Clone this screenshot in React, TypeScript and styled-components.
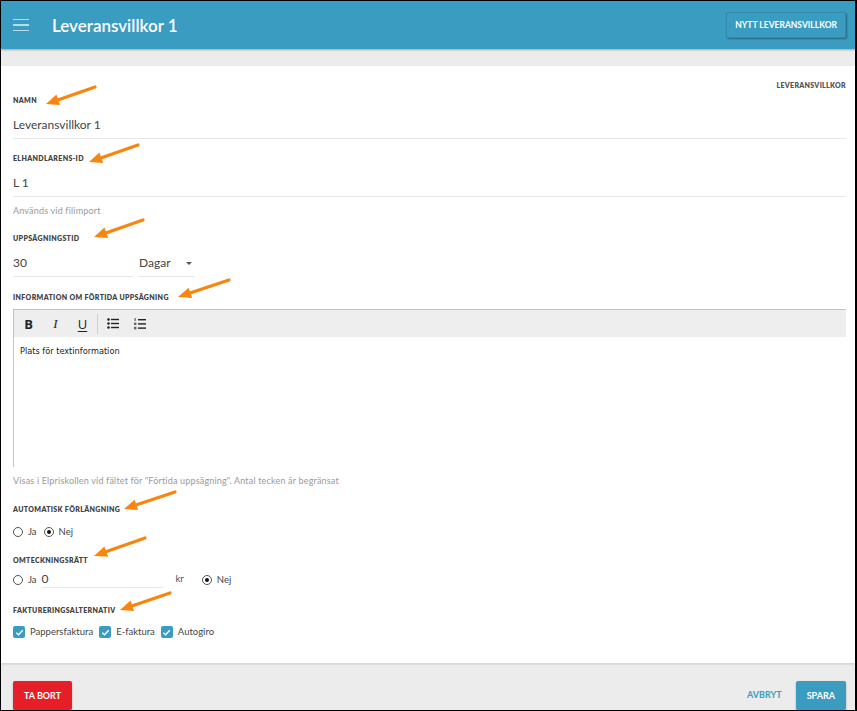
import React from 'react';
import styled, { createGlobalStyle } from 'styled-components';

const BLUE = '#3b9cc1';
const ORANGE = '#f7850f';

const GlobalStyle = createGlobalStyle`
	html, body {
		margin: 0;
		padding: 0;
		background: #fff;
	}
	body {
		font-family: Lato, 'Open Sans', sans-serif;
	}
`;

const Frame = styled.div`
	position: relative;
	width: 857px;
	height: 711px;
	box-sizing: border-box;
	border: 1px solid #000;
	border-right-width: 2px;
	display: flex;
	flex-direction: column;
	overflow: hidden;
	background: #ececec;
`;

const Header = styled.header`
	height: 48px;
	flex: none;
	display: flex;
	align-items: center;
	padding: 0 9px 0 12px;
	background: ${BLUE};
	box-shadow: 0 1px 2px rgba(0, 0, 0, 0.3);
	position: relative;
	z-index: 1;
`;

const Burger = styled.div`
	width: 16px;
	display: flex;
	flex-direction: column;
	gap: 4px;
	margin-right: 23px;

	span {
		height: 1.5px;
		background: rgba(255, 255, 255, 0.65);
	}
`;

const Title = styled.h1`
	margin: 0;
	flex: 1;
	font-size: 17px;
	font-weight: 600;
	color: #fff;
`;

const HeaderButton = styled.button`
	height: 26px;
	padding: 0 8px;
	border: 1px solid rgba(0, 0, 0, 0.12);
	border-radius: 2px;
	background: ${BLUE};
	box-shadow: 1px 1px 2px rgba(0, 0, 0, 0.35);
	color: #fff;
	font-family: inherit;
	font-size: 8.5px;
	font-weight: 700;
`;

const Strip = styled.div`
	height: 17px;
	flex: none;
`;

const Card = styled.main`
	flex: 1;
	background: #fff;
	padding: 14px 9px 0 12px;
	box-shadow: 0 1px 2px rgba(0, 0, 0, 0.2);
`;

const Caption = styled.div`
	text-align: right;
	font-size: 7px;
	line-height: 10px;
	font-weight: 800;
	letter-spacing: 0.3px;
	color: #555;
`;

const Label = styled.div<{ $gap?: number }>`
	margin-top: ${(p) => p.$gap ?? 14}px;
	font-size: 7px;
	line-height: 10px;
	font-weight: 800;
	letter-spacing: 0.35px;
	color: #444;
	text-transform: uppercase;
`;

const TextInput = styled.div<{ $width?: number }>`
	width: ${(p) => (p.$width ? `${p.$width}px` : 'auto')};
	padding: 12px 0 5px 0;
	font-size: 12px;
	line-height: 16px;
	color: #444;
	border-bottom: 1px solid #e8e8e8;
`;

const Helper = styled.div`
	margin-top: 8px;
	font-size: 9px;
	line-height: 12px;
	color: #9a9a9a;
	letter-spacing: 0.18px;
`;

const Row = styled.div<{ $top?: number }>`
	display: flex;
	align-items: center;
	margin-top: ${(p) => p.$top ?? 0}px;
`;

const Select = styled.div`
	width: 57px;
	margin-left: 5px;
	padding: 12px 0 5px 1px;
	box-sizing: border-box;
	display: flex;
	justify-content: space-between;
	align-items: center;
	font-size: 12px;
	line-height: 16px;
	color: #444;
	border-bottom: 1px solid #e8e8e8;

	&::after {
		content: '';
		margin-right: 3px;
		border: 3px solid transparent;
		border-top: 3.5px solid #555;
		border-bottom: 0;
	}
`;

const Editor = styled.div`
	margin-top: 7px;
	border-top: 1px solid #c4c4c4;
	border-left: 1px solid #c4c4c4;
`;

const Toolbar = styled.div`
	height: 27px;
	display: flex;
	align-items: center;
	padding-left: 1px;
	background: #eeeeee;
`;

const ToolButton = styled.span<{ $italic?: boolean; $under?: boolean }>`
	width: 27px;
	height: 20px;
	display: flex;
	align-items: center;
	justify-content: center;
	font-family: ${(p) => (p.$italic ? "'Liberation Serif', serif" : "'Open Sans', sans-serif")};
	font-size: 13px;
	font-weight: ${(p) => (p.$italic ? 400 : p.$under ? 400 : 700)};
	font-style: ${(p) => (p.$italic ? 'italic' : 'normal')};
	text-decoration: ${(p) => (p.$under ? 'underline' : 'none')};
	text-underline-offset: 2px;
	color: #222;
`;

const ToolSep = styled.span`
	width: 1px;
	height: 20px;
	margin: 0 1px;
	background: #cfcfcf;
`;

const EditorBody = styled.div`
	height: 130px;
	padding: 8px 6px;
	box-sizing: border-box;
	font-family: 'DejaVu Sans', Verdana, sans-serif;
	font-size: 8.2px;
	line-height: 12px;
	color: #222;
`;

const Choice = styled.label<{ $space?: number }>`
	display: flex;
	align-items: center;
	gap: 5px;
	margin-right: ${(p) => p.$space ?? 7}px;
	font-size: 9.5px;
	line-height: 14px;
	color: #444;
`;

const Radio = styled.span<{ $on?: boolean }>`
	width: 10px;
	height: 10px;
	box-sizing: border-box;
	border: 1px solid #555;
	border-radius: 50%;
	display: flex;
	align-items: center;
	justify-content: center;

	&::after {
		content: '';
		width: 4px;
		height: 4px;
		border-radius: 50%;
		background: ${(p) => (p.$on ? '#111' : 'transparent')};
	}
`;

const Box = styled.span`
	width: 12px;
	height: 12px;
	border-radius: 2px;
	background: ${BLUE};
	display: flex;
	align-items: center;
	justify-content: center;
`;

const InlineInput = styled.div`
	width: 122px;
	margin: 0 12px 0 -2px;
	font-size: 12px;
	line-height: 16px;
	color: #444;
	border-bottom: 1px solid #e8e8e8;
`;

const Unit = styled.span`
	font-size: 9.5px;
	color: #555;
	margin-right: 18px;
	margin-top: -3px;
`;

const Footer = styled.footer`
	height: 46px;
	flex: none;
	display: flex;
	align-items: flex-end;
	padding: 0 9px 0 12px;
	border-top: 1px solid #d8d8d8;
`;

const Btn = styled.button<{ $color: string }>`
	height: 29px;
	padding: 0 11px;
	border: none;
	border-radius: 2px;
	background: ${(p) => p.$color};
	box-shadow: 0 1px 2px rgba(0, 0, 0, 0.3);
	color: #fff;
	font-family: inherit;
	font-size: 9px;
	font-weight: 700;
`;

const LinkBtn = styled.span`
	margin: 0 14px 10px auto;
	font-size: 9px;
	font-weight: 700;
	color: ${BLUE};
`;

const Overlay = styled.svg`
	position: absolute;
	top: -1px;
	left: -1px;
	pointer-events: none;
`;

const arrows: [number, number, number, number][] = [
	[95, 87, 46, 104],
	[138, 145, 89, 162],
	[143, 220, 94, 237],
	[229, 280, 178, 297],
	[175, 492, 124, 509],
	[145, 538, 94, 556],
	[170, 593, 120, 610],
];

const Arrow = ({ a }: { a: [number, number, number, number] }) => {
	const [x1, y1, x2, y2] = a;
	const dx = x2 - x1;
	const dy = y2 - y1;
	const len = Math.hypot(dx, dy);
	const ux = dx / len;
	const uy = dy / len;
	const bx = x2 - ux * 13;
	const by = y2 - uy * 13;
	const w = 5.5;
	const pts = `${x2},${y2} ${bx - uy * w},${by + ux * w} ${bx + uy * w},${by - ux * w}`;
	return (
		<g>
			<line x1={x1} y1={y1} x2={bx + ux * 2} y2={by + uy * 2} stroke={ORANGE} strokeWidth={3.2} strokeLinecap="round" />
			<polygon points={pts} fill={ORANGE} />
		</g>
	);
};

const Check = () => (
	<svg width="9" height="9" viewBox="0 0 10 10">
		<path d="M1.5 5.2 L4 7.6 L8.6 2.6" stroke="#fff" strokeWidth="1.6" fill="none" />
	</svg>
);

const BulletIcon = () => (
	<svg width="12" height="11" viewBox="0 0 12 11">
		<circle cx="1.5" cy="1.5" r="1.3" fill="#222" />
		<circle cx="1.5" cy="5.5" r="1.3" fill="#222" />
		<circle cx="1.5" cy="9.5" r="1.3" fill="#222" />
		<rect x="4" y="0.8" width="8" height="1.4" fill="#222" />
		<rect x="4" y="4.8" width="8" height="1.4" fill="#222" />
		<rect x="4" y="8.8" width="8" height="1.4" fill="#222" />
	</svg>
);

const NumberIcon = () => (
	<svg width="12" height="12" viewBox="0 0 12 12">
		<rect x="0.6" y="0" width="1" height="3" fill="#444" />
		<rect x="0" y="4.6" width="2.4" height="2.4" fill="#666" />
		<rect x="0" y="8.8" width="2.4" height="2.6" fill="#666" />
		<rect x="4" y="1" width="8" height="1.4" fill="#222" />
		<rect x="4" y="5.2" width="8" height="1.4" fill="#222" />
		<rect x="4" y="9.4" width="8" height="1.4" fill="#222" />
	</svg>
);

const App: React.FC = () => {
	return (
		<>
			<GlobalStyle />
			<Frame>
				<Header>
					<Burger>
						<span />
						<span />
						<span />
					</Burger>
					<Title>Leveransvillkor 1</Title>
					<HeaderButton>NYTT LEVERANSVILLKOR</HeaderButton>
				</Header>
				<Strip />
				<Card>
					<Caption>LEVERANSVILLKOR</Caption>

					<Label $gap={5}>Namn</Label>
					<TextInput>Leveransvillkor 1</TextInput>

					<Label>Elhandlarens-id</Label>
					<TextInput>L 1</TextInput>
					<Helper>Används vid filimport</Helper>

					<Label $gap={16}>Uppsägningstid</Label>
					<Row>
						<TextInput $width={120}>30</TextInput>
						<Select>Dagar</Select>
					</Row>

					<Label $gap={15}>Information om förtida uppsägning</Label>
					<Editor>
						<Toolbar>
							<ToolButton>B</ToolButton>
							<ToolButton $italic>I</ToolButton>
							<ToolButton $under>U</ToolButton>
							<ToolSep />
							<ToolButton>
								<BulletIcon />
							</ToolButton>
							<ToolButton>
								<NumberIcon />
							</ToolButton>
						</Toolbar>
						<EditorBody>Plats för textinformation</EditorBody>
					</Editor>
					<Helper>
						Visas i Elpriskollen vid fältet för "Förtida uppsägning". Antal tecken är begränsat
					</Helper>

					<Label $gap={17}>Automatisk förlängning</Label>
					<Row $top={11}>
						<Choice>
							<Radio />
							Ja
						</Choice>
						<Choice>
							<Radio $on />
							Nej
						</Choice>
					</Row>

					<Label $gap={16}>Omteckningsrätt</Label>
					<Row $top={6}>
						<Choice>
							<Radio />
							Ja
						</Choice>
						<InlineInput>0</InlineInput>
						<Unit>kr</Unit>
						<Choice>
							<Radio $on />
							Nej
						</Choice>
					</Row>

					<Label $gap={17}>Faktureringsalternativ</Label>
					<Row $top={10}>
						<Choice $space={6}>
							<Box>
								<Check />
							</Box>
							Pappersfaktura
						</Choice>
						<Choice $space={6}>
							<Box>
								<Check />
							</Box>
							E-faktura
						</Choice>
						<Choice $space={6}>
							<Box>
								<Check />
							</Box>
							Autogiro
						</Choice>
					</Row>
				</Card>
				<Footer>
					<Btn $color="#e61e28">TA BORT</Btn>
					<LinkBtn>AVBRYT</LinkBtn>
					<Btn $color={BLUE}>SPARA</Btn>
				</Footer>
				<Overlay width="857" height="711" viewBox="0 0 857 711">
					{arrows.map((a, i) => (
						<Arrow key={i} a={a} />
					))}
				</Overlay>
			</Frame>
		</>
	);
};

export default App;
